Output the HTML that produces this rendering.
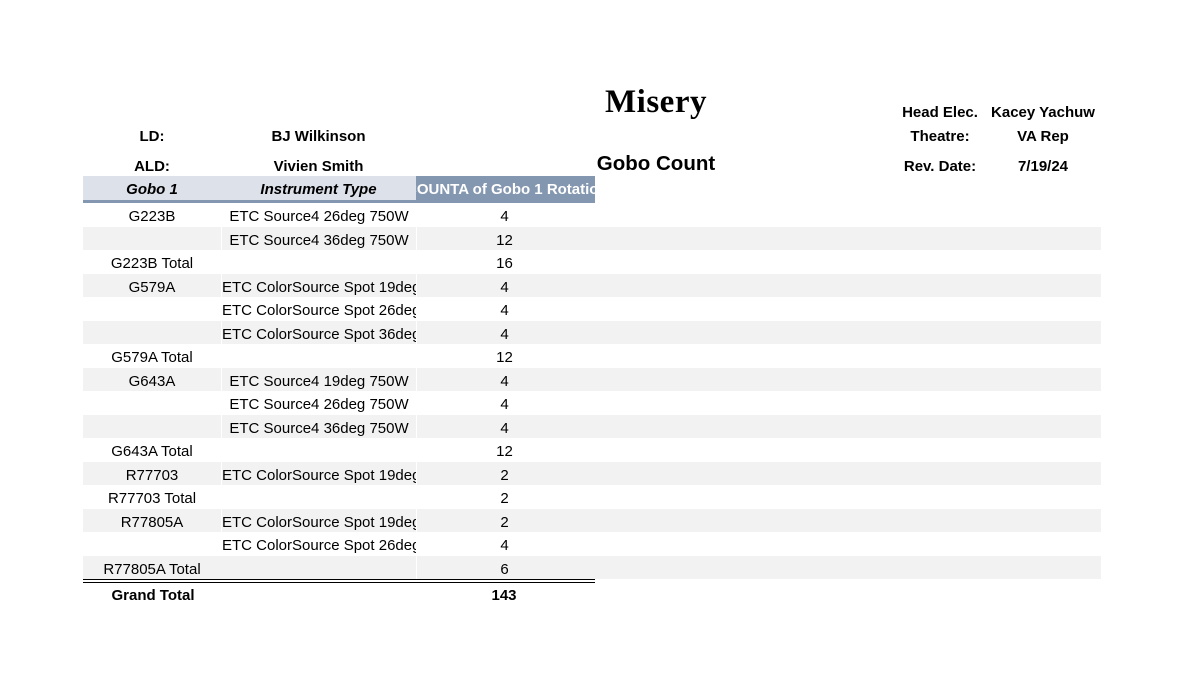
<!DOCTYPE html>
<html><head><meta charset="utf-8"><style>
body{margin:0;width:1185px;height:680px;background:#fff;position:relative;overflow:hidden;font-family:"Liberation Sans",Arial,sans-serif;color:#000}
.a{position:absolute;white-space:nowrap}
.b{font-weight:bold;font-size:15px}
.row{position:absolute;left:83px;height:23.5px;font-size:15px;line-height:28px}
.row.s{background:#f2f2f2;width:1018px}
.row.w{width:512px}
.c{position:absolute;top:0;height:100%;text-align:center;overflow:hidden;white-space:nowrap}
.c1{left:0;width:138px}
.c2{left:138px;width:194px;border-left:1px solid #fff}
.c3{left:333px;width:175px;border-left:1px solid #fff}
.l{text-align:left}
</style></head><body>
<div class="a" style="left:556px;width:200px;text-align:center;top:84px;font-family:'Liberation Serif',serif;font-weight:bold;font-size:33px;letter-spacing:0.5px">Misery</div>
<div class="a" style="left:556px;width:200px;text-align:center;top:152px;font-weight:bold;font-size:20.5px">Gobo Count</div>
<div class="a b" style="left:880px;width:120px;text-align:center;top:104px">Head Elec.</div>
<div class="a b" style="left:980px;width:126px;text-align:center;top:104px">Kacey Yachuw</div>
<div class="a b" style="left:880px;width:120px;text-align:center;top:128px">Theatre:</div>
<div class="a b" style="left:980px;width:126px;text-align:center;top:128px">VA Rep</div>
<div class="a b" style="left:880px;width:120px;text-align:center;top:158px">Rev. Date:</div>
<div class="a b" style="left:980px;width:126px;text-align:center;top:158px">7/19/24</div>
<div class="a b" style="left:83px;width:138px;text-align:center;top:128px">LD:</div>
<div class="a b" style="left:221px;width:195px;text-align:center;top:128px">BJ Wilkinson</div>
<div class="a b" style="left:83px;width:138px;text-align:center;top:158px">ALD:</div>
<div class="a b" style="left:221px;width:195px;text-align:center;top:158px">Vivien Smith</div>
<div class="a" style="left:83px;top:176px;width:333px;height:25px;background:#dde1ea"></div>
<div class="a" style="left:416px;top:176px;width:179px;height:25px;background:#8497b0;overflow:hidden;color:#fff;font-weight:bold;font-size:15px;line-height:28px"><span style="margin-left:-10px">COUNTA of Gobo 1 Rotation</span></div>
<div class="a" style="left:83px;top:200px;width:512px;height:3px;background:#8497b0"></div>
<div class="a" style="left:83px;width:138px;text-align:center;top:176px;line-height:28px;font-weight:bold;font-style:italic;font-size:15px">Gobo 1</div>
<div class="a" style="left:221px;width:195px;text-align:center;top:176px;line-height:28px;font-weight:bold;font-style:italic;font-size:15px">Instrument Type</div>

<div class="row w" style="top:203px"><div class="c c1">G223B</div><div class="c c2">ETC Source4 26deg 750W</div><div class="c c3">4</div></div>
<div class="row s" style="top:226.5px"><div class="c c1"></div><div class="c c2">ETC Source4 36deg 750W</div><div class="c c3">12</div></div>
<div class="row w" style="top:250px"><div class="c c1">G223B Total</div><div class="c c3">16</div></div>
<div class="row s" style="top:273.5px"><div class="c c1">G579A</div><div class="c c2 l">ETC ColorSource Spot 19deg</div><div class="c c3">4</div></div>
<div class="row w" style="top:297px"><div class="c c2 l">ETC ColorSource Spot 26deg</div><div class="c c3">4</div></div>
<div class="row s" style="top:320.5px"><div class="c c2 l">ETC ColorSource Spot 36deg</div><div class="c c3">4</div></div>
<div class="row w" style="top:344px"><div class="c c1">G579A Total</div><div class="c c3">12</div></div>
<div class="row s" style="top:367.5px"><div class="c c1">G643A</div><div class="c c2">ETC Source4 19deg 750W</div><div class="c c3">4</div></div>
<div class="row w" style="top:391px"><div class="c c2">ETC Source4 26deg 750W</div><div class="c c3">4</div></div>
<div class="row s" style="top:414.5px"><div class="c c2">ETC Source4 36deg 750W</div><div class="c c3">4</div></div>
<div class="row w" style="top:438px"><div class="c c1">G643A Total</div><div class="c c3">12</div></div>
<div class="row s" style="top:461.5px"><div class="c c1">R77703</div><div class="c c2 l">ETC ColorSource Spot 19deg</div><div class="c c3">2</div></div>
<div class="row w" style="top:485px"><div class="c c1">R77703 Total</div><div class="c c3">2</div></div>
<div class="row s" style="top:508.5px"><div class="c c1">R77805A</div><div class="c c2 l">ETC ColorSource Spot 19deg</div><div class="c c3">2</div></div>
<div class="row w" style="top:532px"><div class="c c2 l">ETC ColorSource Spot 26deg</div><div class="c c3">4</div></div>
<div class="row s" style="top:555.5px"><div class="c c1">R77805A Total</div><div class="c c3">6</div></div>
<div class="a" style="left:83px;top:579px;width:512px;height:1px;background:#000"></div>
<div class="a" style="left:83px;top:582px;width:512px;height:1px;background:#000"></div>
<div class="a b" style="left:83px;width:140px;text-align:center;top:587px">Grand Total</div>
<div class="a b" style="left:416px;width:176px;text-align:center;top:587px">143</div>
</body></html>
